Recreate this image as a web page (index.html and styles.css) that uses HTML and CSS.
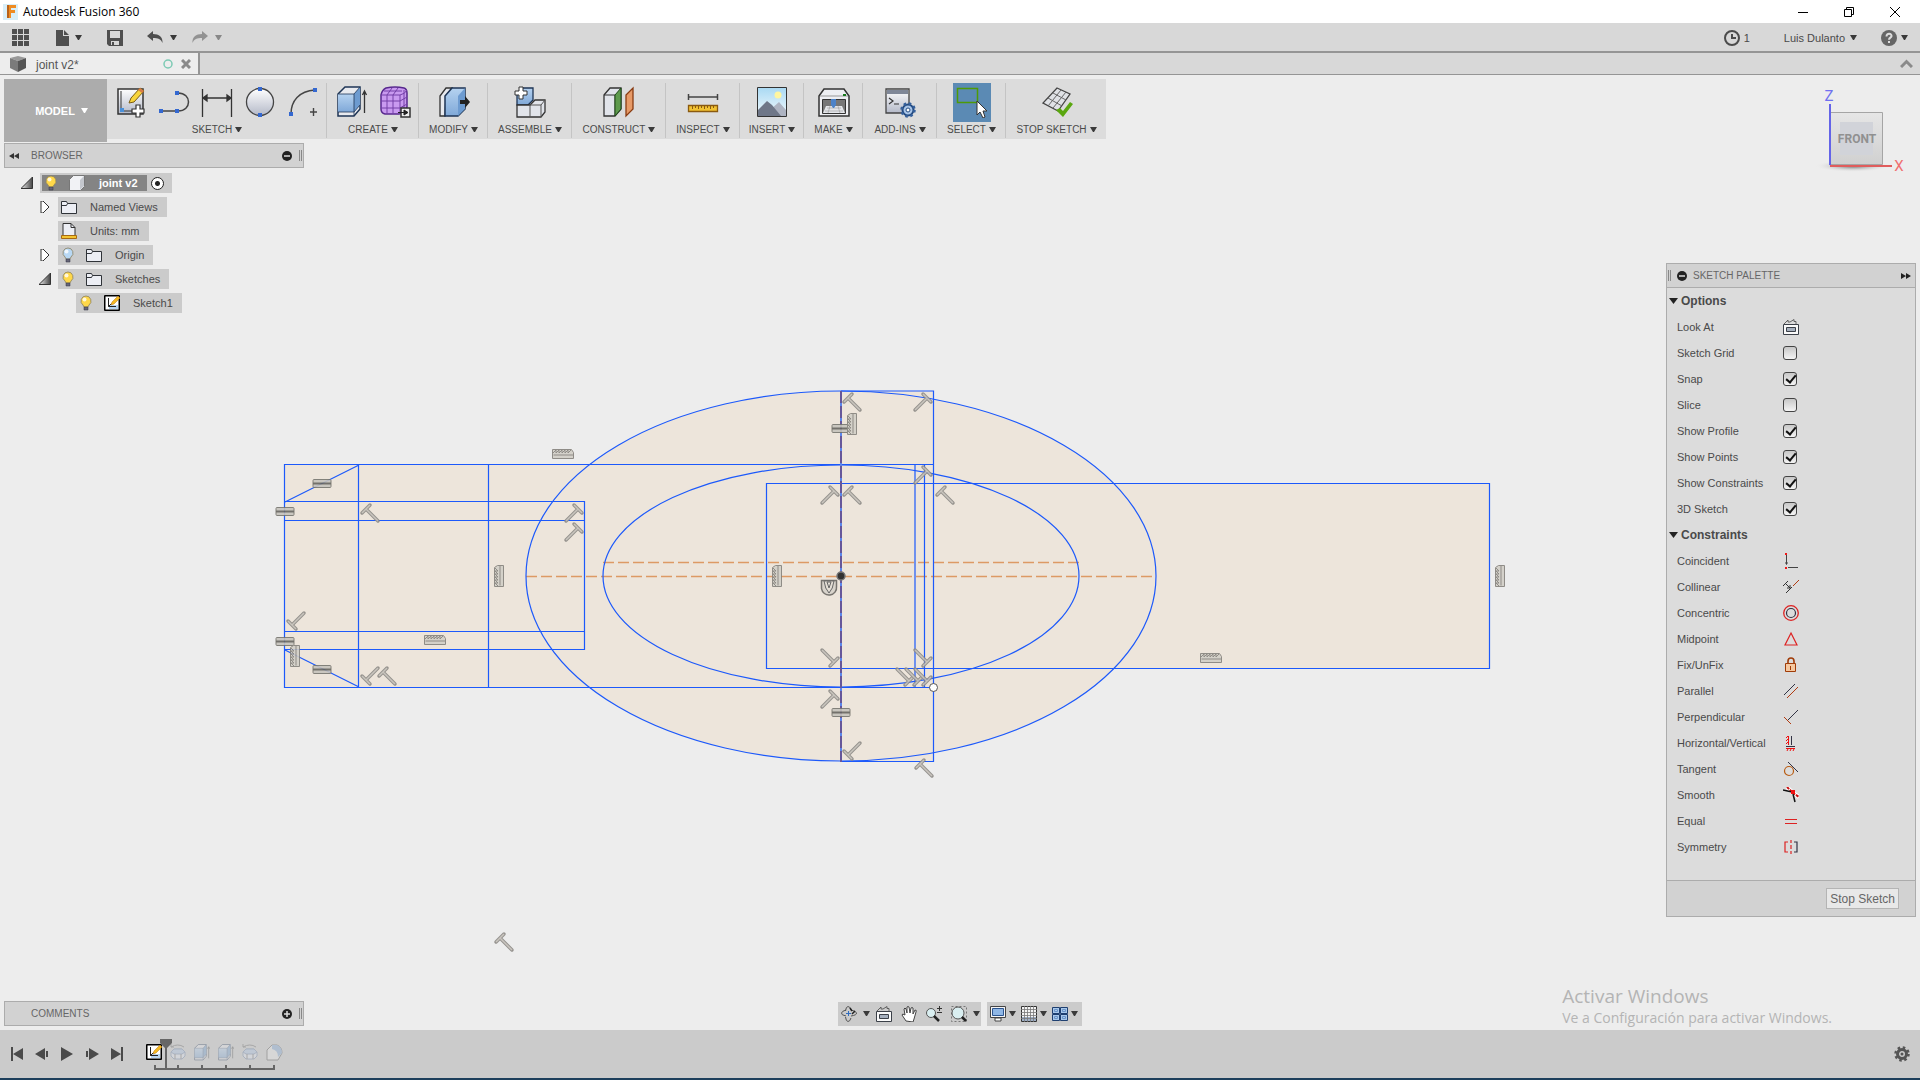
FILE: index.html
```html
<!DOCTYPE html>
<html lang="en">
<head>
    <meta charset="utf-8">
    <title>Autodesk Fusion 360</title>
    <link rel="stylesheet" href="styles.css">
</head>
<body>
    <!-- shared icons -->
    <svg class="defs" width="0" height="0">
        <defs>
            <linearGradient id="g-white" x1="0" y1="0" x2="0" y2="1"><stop offset="0" stop-color="#fff"/><stop offset="1" stop-color="#b4b9c8"/></linearGradient>
            <linearGradient id="g-blue" x1="0" y1="0" x2="0" y2="1"><stop offset="0" stop-color="#b5d2f0"/><stop offset="1" stop-color="#7fa8d8"/></linearGradient>
            <linearGradient id="g-sky" x1="0" y1="0" x2="0" y2="1"><stop offset="0" stop-color="#a9d9f3"/><stop offset="1" stop-color="#f3fafd"/></linearGradient>
            <linearGradient id="g-tri" x1="0" y1="0" x2="1" y2="0"><stop offset="0" stop-color="#eee"/><stop offset="1" stop-color="#444"/></linearGradient>
            <linearGradient id="g-cube" x1="0" y1="0" x2="0" y2="1"><stop offset="0" stop-color="#e6e6e6"/><stop offset="1" stop-color="#d0d0d0"/></linearGradient>
            <radialGradient id="g-shadow"><stop offset="0" stop-color="#666"/><stop offset="1" stop-color="#ededed" stop-opacity="0"/></radialGradient>
            <symbol id="caret" viewBox="0 0 7 6"><path d="M0 0h7L4 5H3z" fill="#3a3a3a"/></symbol>
            <symbol id="bulb" viewBox="0 0 14 16">
                <path d="M7 1a5 5 0 0 0-3 9l1 2h4l1-2a5 5 0 0 0-3-9z" fill="currentColor" stroke="#8a8060" stroke-width=".8"/>
                <circle cx="5.500" cy="4.500" r="2" fill="#fff" opacity=".8"/>
                <path d="M5 12h4v3H5z" fill="#667" stroke="#334" stroke-width=".5"/>
            </symbol>
            <symbol id="folder" viewBox="0 0 16 14"><path d="M.5 13.500v-12h5l1 2h9v10z" fill="#eceef4" stroke="#2f3338"/><path d="M.5 5.500h5l1-2" fill="none" stroke="#2f3338"/></symbol>
            <symbol id="sketch" viewBox="0 0 16 16">
                <path d="M.5.500h15v15H.5z" fill="#fff" stroke="#000"/><path d="M1 1h14v14H1z" fill="none" stroke="#000"/><path d="M5 10h9v4H5z" fill="#b9d6f2"/>
                <path d="M4.500 3v8.500H12M4.500 11.500l3-3" fill="none" stroke="#222"/>
                <path d="M7 10l1-3 6-6 2 2-6 6z" fill="#f5b921" stroke="#b5751a" stroke-width=".5"/>
            </symbol>
            <symbol id="lookat" viewBox="0 0 16 16">
                <path d="M.5 5.500h15v10H.5z" fill="#fafafa" stroke="#3b4048"/><path d="M3.500 8.500h9v4h-9z" fill="#a5afbd" stroke="#3b4048"/>
                <path d="M1 5l4-4v2l2 0 4-2.500v2h2l0 3" fill="none" stroke="#555" stroke-width=".9"/>
            </symbol>
            <symbol id="box" viewBox="0 0 30 32">
                <path d="M1 8l7-7h15v22l-6 7H1z" fill="#e8eaef" stroke="#1e3555" stroke-width="1.500"/><path d="M1 8h16v18H1z" fill="url(#g-blue)"/>
                <path d="M17 8l6-7v18l-6 7z" fill="#6d9bd0"/><path d="M1 8h16V30M17 8l6-7M1 26h16l6-7" fill="none" stroke="#1e3555" stroke-width=".8"/>
                <path d="M27.500 27V6M25.500 9l2-4 2 4" fill="none" stroke="#333" stroke-width="1.300"/>
            </symbol>
            <symbol id="ring" viewBox="0 0 16 16">
                <path d="M1 8l3-3h8l3 3v4l-3 3H4l-3-3z" fill="#e4eaf4" stroke="#6f86ac"/><path d="M1 8l3-3h8l3 3-3 2H4z" fill="#a9c3e6" stroke="#6f86ac"/>
                <path d="M1 3q7-4 13 0M1 0v3h3M5 10v5M11 10v5" fill="none" stroke="#666"/>
            </symbol>
            <!-- constraint glyphs, drawn around 0,0 -->
            <g id="perp"><path d="M-8 0l8-8M-4-4L8 8" fill="none" stroke="#8d8a86" stroke-width="3.500" stroke-linecap="round"/><path d="M-8 0l8-8M-4-4L8 8" fill="none" stroke="#c6c1ba" stroke-width="1.500"/></g>
            <g id="bars"><rect x="-9" y="-3.500" width="18" height="8" rx="1" fill="#c6c2bb" stroke="#77756f"/><path d="M-9 .5H9" stroke="#66645f" stroke-width="2"/></g>
            <g id="hatch"><path d="M-10.500 4.500h21v-6l-2-3h-19z" fill="#d2cec7" stroke="#85827c"/><path d="M-9.500 1H10M-10-1l3-3v3l3-3v3l3-3v3l3-3v3l3-3v3l3-3" fill="none" stroke="#85827c"/></g>
        </defs>
    </svg>

    <header class="titlebar">
        <svg width="15" height="16" viewBox="0 0 15 16"><path d="M0 0h15v16H0z" fill="#d8eef8"/><path d="M4 1h9v3H8v2h4v3H8v5H4z" fill="#ef8b22"/><path d="M4 1h2v13H4z" fill="#b8621a"/></svg>
        <h1>Autodesk Fusion 360</h1>
        <div class="window-buttons">
            <button aria-label="Minimize"><svg width="10" height="10"><path d="M0 5.500h10" stroke="#000"/></svg></button>
            <button aria-label="Restore"><svg width="10" height="10" fill="none" stroke="#000"><path d="M.5 2.500h7v7h-7zM2.500 2V.5h7v7H8"/></svg></button>
            <button aria-label="Close"><svg width="10" height="10" stroke="#000"><path d="M0 0l10 10M10 0L0 10"/></svg></button>
        </div>
    </header>

    <div class="quickbar">
        <button class="apps" aria-label="Data panel"><svg width="17" height="17" fill="#4f4f4f"><path d="M0 0h5v5H0zM6 0h5v5H6zM12 0h5v5h-5zM0 6h5v5H0zM6 6h5v5H6zM12 6h5v5h-5zM0 12h5v5H0zM6 12h5v5H6zM12 12h5v5h-5z"/></svg></button>
        <button class="file" aria-label="File"><svg width="13" height="16" fill="#4f4f4f"><path d="M0 0h7v6h6v10H0zM8 0l5 5H8z"/></svg><svg class="caret"><use href="#caret"/></svg></button>
        <button class="save" aria-label="Save"><svg width="16" height="16"><path d="M0 0h16v16H2l-2-2z" fill="#4f4f4f"/><path d="M3 1h10v7H3zM4 11h8v4H4z" fill="#d8d8d8"/><path d="M5 12h2v3H5z" fill="#4f4f4f"/></svg></button>
        <button class="undo" aria-label="Undo"><svg width="16" height="13" fill="#4f4f4f"><path d="M0 5l6-5v3c6 0 10 3 9.500 9C14 8 11 7 6 7v3z"/></svg><svg class="caret"><use href="#caret"/></svg></button>
        <button class="redo" aria-label="Redo"><svg width="16" height="13" fill="#4f4f4f"><path d="M16 5l-6-5v3C4 3 0 6 .5 12 2 8 5 7 10 7v3z"/></svg><svg class="caret"><use href="#caret"/></svg></button>
        <div class="account">
            <button class="jobs"><svg width="16" height="16" fill="none" stroke="#4b4b4b" stroke-width="2"><circle cx="8" cy="8" r="7"/><path d="M8 4v4h4"/></svg>1</button>
            <button class="user">Luis Dulanto<svg class="caret"><use href="#caret"/></svg></button>
            <button class="help" aria-label="Help"><svg width="16" height="16"><circle cx="8" cy="8" r="8" fill="#666"/><path d="M5.500 6.500c0-4 5.500-3 5-.3-.3 1.500-2.500 1.500-2.500 3.500M8 11v2" fill="none" stroke="#ddd" stroke-width="2"/></svg><svg class="caret"><use href="#caret"/></svg></button>
        </div>
    </div>

    <div class="tabs">
        <div class="tab">
            <svg width="16" height="16"><path d="M0 2l8-2 8 2-8 3z" fill="#999"/><path d="M0 2l8 3v11l-8-4z" fill="#7b7b7b"/><path d="M16 2L8 5v11l8-4z" fill="#555"/></svg>
            <span>joint v2*</span>
            <svg class="state" width="10" height="10"><circle cx="5" cy="5" r="4" fill="none" stroke="#7ccab4" stroke-width="1.500"/></svg>
            <button aria-label="Close tab"><svg width="10" height="10" stroke="#8a8a8a" stroke-width="3"><path d="M1 1l8 8M9 1L1 9"/></svg></button>
        </div>
        <button class="collapse" aria-label="Collapse"><svg width="13" height="9" fill="none" stroke="#8a8a8a" stroke-width="3"><path d="M1 8l5.500-5.500L12 8"/></svg></button>
    </div>

    <main class="workspace">
        <svg class="canvas" viewBox="0 75 1920 955">
            <g fill="#ede5db">
                <path d="M285 465h648v223H285zM767 484h723v185H767zM841 391h92v371h-92z"/>
                <ellipse cx="841" cy="576" rx="315" ry="185"/>
            </g>
            <g fill="none" stroke="#dd9a65" stroke-width="1.500" stroke-dasharray="11 4"><path d="M526 576.500h630M603 562.500h476"/></g>
            <g fill="none" stroke="#1c59fb" stroke-width="1.200">
                <path d="M933 464.500H284.500v223H933M358.500 465v223M488.500 465v223M285 501.500h299.500v148H285M285 520.500h299M285 631.500h299M285 502l74-37M285 650l74 37"/>
                <path d="M841 391h92.500v370.500H841M766.500 483.500h723v185h-723zM915 465v222M924.500 465v222"/>
                <ellipse cx="841" cy="576" rx="315" ry="185"/>
                <ellipse cx="841" cy="576" rx="238" ry="111"/>
            </g>
            <path d="M841 391v371" stroke="#5a85ea" stroke-width="2"/><path d="M841 391v371" stroke="#66579a" stroke-width="2" stroke-dasharray="12 3"/>
            <g opacity=".9">
                <use href="#perp" x="370" y="513"/><use href="#perp" x="852" y="402"/><use href="#perp" x="852" y="495"/><use href="#perp" x="945" y="495"/>
                <use href="#perp" x="924" y="768"/><use href="#perp" x="387" y="676"/><use href="#perp" x="504" y="942"/>
                <use href="#perp" transform="translate(574 513) rotate(90)"/><use href="#perp" transform="translate(574 532) rotate(90)"/>
                <use href="#perp" transform="translate(923 402) rotate(90)"/><use href="#perp" transform="translate(923 475) rotate(90)"/>
                <use href="#perp" transform="translate(830 495) rotate(90)"/><use href="#perp" transform="translate(830 699) rotate(90)"/>
                <use href="#perp" transform="translate(296 621) rotate(270)"/><use href="#perp" transform="translate(370 676) rotate(270)"/><use href="#perp" transform="translate(852 751) rotate(270)"/>
                <use href="#perp" transform="translate(830 658) rotate(180)"/><use href="#perp" transform="translate(923 658) rotate(180)"/>
                <use href="#perp" transform="translate(905 677) rotate(180)"/><use href="#perp" transform="translate(914 677) rotate(180)"/><use href="#perp" transform="translate(923 677) rotate(180)"/>
                <use href="#bars" x="322" y="483"/><use href="#bars" x="285" y="511"/><use href="#bars" x="285" y="641"/><use href="#bars" x="322" y="669"/><use href="#bars" x="841" y="428"/><use href="#bars" x="841" y="712"/>
                <use href="#hatch" x="563" y="454"/><use href="#hatch" x="435" y="640"/><use href="#hatch" x="1211" y="658"/>
                <use href="#hatch" transform="translate(499 576) rotate(270)"/><use href="#hatch" transform="translate(295 656) rotate(270)"/><use href="#hatch" transform="translate(852 424) rotate(270)"/>
                <use href="#hatch" transform="translate(777 576) rotate(270)"/><use href="#hatch" transform="translate(1500 576) rotate(270)"/>
            </g>
            <path d="M821.500 580.500h15v6a7.500 7.500 0 0 1-15 2z" fill="#d8d3cb" stroke="#77746f" stroke-width="1.500"/><path d="M824 581q1 8 5 12 4-4 5-12zM827 582l2 6 2-6z" fill="#e4ded5" stroke="#666"/>
            <circle cx="841" cy="576" r="4" fill="#333" stroke="#777" stroke-width="1.500"/>
            <circle cx="933.500" cy="687.500" r="4" fill="#fff" stroke="#555"/>
        </svg>

        <nav class="toolbar">
            <button class="model">MODEL<svg width="7" height="5"><path d="M0 0h7L4 5H3z" fill="#fff"/></svg></button>
            <div class="group">
                <div class="icons">
                    <button aria-label="Create sketch"><svg width="32" height="32"><path d="M3 3h25v25H3z" fill="url(#g-white)" stroke="#333" stroke-width="1.500"/><path d="M6 5v20h12" fill="none" stroke="#333"/><path d="M5 22h4v4H5z" fill="#4a90d9"/><path d="M14 17l2-5L25 2l4 3-10 11z" fill="#f8d53c" stroke="#7a5c14"/><path d="M25 2l4 3-2 2-4-3z" fill="#d87d4a"/><path d="M21 19h4v4h4v4h-4v4h-4v-4h-4v-4h4z" fill="#fff" stroke="#333" stroke-width="1.200"/></svg></button>
                    <button aria-label="Line"><svg width="32" height="32"><path d="M4 25h16c14 0 14-18 0-18" fill="none" stroke="#444" stroke-width="1.500"/><path d="M1 23h4v4H1zM17 23h4v4h-4zM17 5h4v4h-4z" fill="#3468d0"/></svg></button>
                    <button aria-label="Dimension"><svg width="32" height="32"><path d="M1.500 3v28M30.500 3v28M2 12h28M6 9l-4 3 4 3zM26 9l4 3-4 3z" fill="#333" stroke="#333" stroke-width="1.300"/></svg></button>
                    <button aria-label="Circle"><svg width="32" height="32"><circle cx="16" cy="16" r="13.500" fill="url(#g-white)" stroke="#444" stroke-width="1.300"/><path d="M14 1h4v4h-4zM14 27h4v4h-4z" fill="#3468d0"/></svg></button>
                    <button aria-label="Arc"><svg width="32" height="32"><path d="M4 28C4 15 12 5 28 4M23 26h7M26.500 22v8" fill="none" stroke="#444" stroke-width="1.400"/><path d="M2 26h4v4H2zM26 2h4v4h-4z" fill="#3468d0"/></svg></button>
                </div>
                <button class="menu">SKETCH<svg class="caret"><use href="#caret"/></svg></button>
            </div>
            <div class="group">
                <div class="icons">
                    <button aria-label="Extrude"><svg width="32" height="32"><use href="#box"/></svg></button>
                    <button aria-label="Create form"><svg width="32" height="32"><path d="M7 2q9-2 18 0 3 1 3 5v14q-1 5-8 7H6q-4-1-4-5V9q1-5 5-7z" fill="#c99af0" stroke="#58298e" stroke-width="1.500"/><path d="M2 9h19q5-1 7-5M21 9v19M8 9v19M14 9v19M2 15h19l7-4M2 22h19l7-4M5 5h18M13 2l-5 7M19 2l-5 7M25 4v21" fill="none" stroke="#7440a8"/><path d="M22 22h9v9h-9z" fill="#eee" stroke="#333" stroke-width="1.500"/><path d="M19 26.500h8M25 24l4 2.500-4 2.500z" fill="#222" stroke="#222"/></svg></button>
                </div>
                <button class="menu">CREATE<svg class="caret"><use href="#caret"/></svg></button>
            </div>
            <div class="group">
                <div class="icons"><button aria-label="Press pull"><svg width="32" height="32"><path d="M2 10l6-8h6l-6 8-1 20H2z" fill="#e7e9ee" stroke="#333" stroke-width="1.300"/><path d="M7 10l7-8h13v21l-7 7H7z" fill="url(#g-blue)" stroke="#1e3555" stroke-width="1.500"/><path d="M20 10l7-8v21l-7 7z" fill="#6d9bd0"/><path d="M22 14h5v-4l5 6-5 6v-4h-5z" fill="#222"/></svg></button></div>
                <button class="menu">MODIFY<svg class="caret"><use href="#caret"/></svg></button>
            </div>
            <div class="group">
                <div class="icons"><button aria-label="New component"><svg width="32" height="32"><path d="M3 8l5-6h11v12l-5 5H3z" fill="url(#g-blue)" stroke="#1e3555" stroke-width="1.300"/><path d="M3 19h13l5-5h10v12l-4 5H3z" fill="#e1e4ea" stroke="#333" stroke-width="1.300"/><path d="M16 19v12M16 19h11l4-5M27 19v12" fill="none" stroke="#555"/><path d="M5 1h4v4h4v4H9v4H5V9H1V5h4z" fill="#fff" stroke="#333"/></svg></button></div>
                <button class="menu">ASSEMBLE<svg class="caret"><use href="#caret"/></svg></button>
            </div>
            <div class="group">
                <div class="icons"><button aria-label="Offset plane"><svg width="32" height="32"><path d="M1 9l6-7h11v21l-6 7H1z" fill="#e1e4ea" stroke="#333" stroke-width="1.300"/><path d="M1 9h11v21" fill="none" stroke="#333"/><path d="M12 9l6-7v21l-6 7z" fill="#5d9a4d" stroke="#1f4a18"/><path d="M23 9l7-7v21l-7 7z" fill="#e79a67" stroke="#8a3c12" stroke-width="1.300"/></svg></button></div>
                <button class="menu">CONSTRUCT<svg class="caret"><use href="#caret"/></svg></button>
            </div>
            <div class="group">
                <div class="icons"><button aria-label="Measure"><svg width="32" height="32"><path d="M1.500 8v6M30.500 8v6M1 11h30" stroke="#444" stroke-width="1.500"/><path d="M1.500 19.500h29v6h-29z" fill="#f1c232" stroke="#8a5a10" stroke-width="1.300"/><path d="M5.500 20v3M8.500 20v2M11.500 20v3M14.500 20v2M17.500 20v3M20.500 20v2M23.500 20v3M26.500 20v2" stroke="#8a5a10"/></svg></button></div>
                <button class="menu">INSPECT<svg class="caret"><use href="#caret"/></svg></button>
            </div>
            <div class="group">
                <div class="icons"><button aria-label="Decal"><svg width="32" height="32"><path d="M1.500 1.500h29v29h-29z" fill="url(#g-sky)"/><circle cx="22" cy="9" r="3.500" fill="#fff6a0"/><path d="M14 24l9-8 7 8v6H14z" fill="#aeb4c2"/><path d="M2 24l9-9 5 4 9 11H2z" fill="#6f7788"/><path d="M1.500 1.500h29v29h-29z" fill="none" stroke="#333"/></svg></button></div>
                <button class="menu">INSERT<svg class="caret"><use href="#caret"/></svg></button>
            </div>
            <div class="group">
                <div class="icons"><button aria-label="3D print"><svg width="32" height="32"><path d="M1 10l5-7h20l5 7v20H1z" fill="#eeeff2" stroke="#333" stroke-width="1.500"/><path d="M2 10h28" stroke="#999"/><path d="M25 8h3v2h-3z" fill="#167a1c"/><path d="M4.500 13.500h23v14h-23z" fill="#777" stroke="#333"/><path d="M8 20h16l3 7H5z" fill="#e4e6ea"/><path d="M9 22h14M7 25h18M12 20l-2 7M20 20l2 7" stroke="#999" stroke-width=".6"/><path d="M13 13h5v6l-2 3h-1l-2-3z" fill="#4d83c9"/></svg></button></div>
                <button class="menu">MAKE<svg class="caret"><use href="#caret"/></svg></button>
            </div>
            <div class="group">
                <div class="icons"><button aria-label="Scripts"><svg width="32" height="32"><path d="M2 3h23v24H2z" fill="url(#g-white)" stroke="#444" stroke-width="1.300"/><path d="M3 4h21v4H3z" fill="#7f8798"/><path d="M5 12l4 3-4 3M10 18h5" fill="none" stroke="#333" stroke-width="1.200"/><circle cx="24" cy="24" r="5.500" fill="#a9c5e8" stroke="#234a80" stroke-width="2"/><circle cx="24" cy="24" r="6.500" fill="none" stroke="#35609c" stroke-width="2.500" stroke-dasharray="2.500 2.600"/><circle cx="24" cy="24" r="2" fill="#fff" stroke="#234a80"/></svg></button></div>
                <button class="menu">ADD-INS<svg class="caret"><use href="#caret"/></svg></button>
            </div>
            <div class="group">
                <div class="icons"><button class="active" aria-label="Select"><svg width="32" height="32"><path d="M1.500 2.500h20v14h-20z" fill="none" stroke="#4e9a06" stroke-width="1.500"/><path d="M21 15v14l3-3 3 6 2-1-2-6h4z" fill="#fff" stroke="#333"/></svg></button></div>
                <button class="menu">SELECT<svg class="caret"><use href="#caret"/></svg></button>
            </div>
            <div class="group">
                <div class="icons"><button aria-label="Stop sketch"><svg width="32" height="32"><path d="M16 2l13 6-12 17L2 17z" fill="#e0e2e6" stroke="#444" stroke-width="1.300"/><path d="M20 4L7 20M25 6L12 22M12 7l13 7M7 12l14 8" stroke="#666" fill="none"/><path d="M15 24l4-2 3 3 7-9 3 2-10 13z" fill="#5aa70f"/></svg></button></div>
                <button class="menu">STOP SKETCH<svg class="caret"><use href="#caret"/></svg></button>
            </div>
        </nav>

        <svg class="viewcube" width="90" height="95" viewBox="0 0 90 95">
            <ellipse cx="38" cy="80" rx="38" ry="6" fill="url(#g-shadow)"/>
            <path d="M15.500 26.500h52v52h-52z" fill="url(#g-cube)" stroke="#a5a5a5"/>
            <path d="M25 36h33v33H25z" fill="#d1d3d9"/>
            <text x="42" y="57" class="face">FRONT</text>
            <path d="M15 18v61" stroke="#6464e8" stroke-width="2"/><path d="M15 80h62" stroke="#e05c5c" stroke-width="2"/>
            <text x="14" y="15" class="axis z">Z</text><text x="84" y="85" class="axis x">X</text>
        </svg>

        <section class="browser">
            <header class="bar">
                <svg width="10" height="6" fill="#333"><path d="M5 0v6L0 3zM10 0v6L5 3z"/></svg>
                <h2>BROWSER</h2>
                <button aria-label="Collapse all"><svg width="10" height="10"><circle cx="5" cy="5" r="5" fill="#222"/><path d="M2 5h6" stroke="#ddd" stroke-width="1.500"/></svg></button>
                <span class="grip"></span>
            </header>
            <ul class="tree">
                <li><svg class="arrow" viewBox="0 0 12 12"><path d="M11.500 0v11.500H0z" fill="url(#g-tri)" stroke="#333"/></svg>
                    <div class="node root"><span class="name"><svg class="bulb on"><use href="#bulb"/></svg><svg width="16" height="16" viewBox="0 0 16 16"><path d="M.5 4.500l4-4h11v11l-4 4H.5z" fill="#f1f2f5" stroke="#777"/><path d="M11 5l4-4v10l-4 4z" fill="#c4c7cd"/></svg>joint v2</span><label class="activate"><input type="radio" name="active" checked aria-label="Activate component"></label></div></li>
                <li class="deep"><svg class="arrow" viewBox="0 0 12 12"><path d="M2 0v12l2 0 6-6-6-6z" fill="#fff" stroke="#333"/></svg><div class="node"><svg class="folder"><use href="#folder"/></svg>Named Views</div></li>
                <li class="deep"><span class="arrow"></span><div class="node"><svg class="folder" viewBox="0 0 16 16"><path d="M2 12.500V.5h8l4 4v8z" fill="#eceef4" stroke="#333"/><path d="M10 .5v4h4" fill="none" stroke="#333"/><path d="M.5 12.500h15v3H.5z" fill="#f4c430" stroke="#a86a10"/></svg>Units: mm</div></li>
                <li class="deep"><svg class="arrow" viewBox="0 0 12 12"><path d="M2 0v12l2 0 6-6-6-6z" fill="#fff" stroke="#333"/></svg><div class="node"><svg class="bulb off"><use href="#bulb"/></svg><svg class="folder"><use href="#folder"/></svg>Origin</div></li>
                <li class="deep"><svg class="arrow" viewBox="0 0 12 12"><path d="M11.500 0v11.500H0z" fill="url(#g-tri)" stroke="#333"/></svg><div class="node"><svg class="bulb on"><use href="#bulb"/></svg><svg class="folder"><use href="#folder"/></svg>Sketches</div></li>
                <li class="deeper"><div class="node"><svg class="bulb on"><use href="#bulb"/></svg><svg class="folder"><use href="#sketch"/></svg>Sketch1</div></li>
            </ul>
        </section>

        <aside class="palette">
            <header class="bar">
                <span class="grip"></span>
                <button aria-label="Collapse"><svg width="10" height="10"><circle cx="5" cy="5" r="5" fill="#222"/><path d="M2 5h6" stroke="#ddd" stroke-width="1.500"/></svg></button>
                <h2>SKETCH PALETTE</h2>
                <svg width="10" height="6" fill="#222"><path d="M0 0v6l5-3zM5 0v6l5-3z"/></svg>
            </header>
            <div class="rows">
                <h3><svg width="9" height="6"><path d="M0 0h9L4.500 6z" fill="#222"/></svg>Options</h3>
                <div class="row"><span>Look At</span><button aria-label="Look At"><svg width="16" height="16"><use href="#lookat"/></svg></button></div>
                <div class="row"><label for="grid">Sketch Grid</label><input type="checkbox" id="grid"></div>
                <div class="row"><label for="snap">Snap</label><input type="checkbox" id="snap" checked></div>
                <div class="row"><label for="slice">Slice</label><input type="checkbox" id="slice"></div>
                <div class="row"><label for="profile">Show Profile</label><input type="checkbox" id="profile" checked></div>
                <div class="row"><label for="points">Show Points</label><input type="checkbox" id="points" checked></div>
                <div class="row"><label for="constraints">Show Constraints</label><input type="checkbox" id="constraints" checked></div>
                <div class="row"><label for="sketch3d">3D Sketch</label><input type="checkbox" id="sketch3d" checked></div>
                <h3><svg width="9" height="6"><path d="M0 0h9L4.500 6z" fill="#222"/></svg>Constraints</h3>
                <div class="row"><span>Coincident</span><button aria-label="Coincident"><svg width="16" height="16"><path d="M3.500 2v9M5 14.500h10M2.500 9.500l1 2 1-2" fill="none" stroke="#444"/><path d="M2 0h2v2H2zM2 14h2v2H2z" fill="#f01818"/></svg></button></div>
                <div class="row"><span>Collinear</span><button aria-label="Collinear"><svg width="16" height="16" fill="none"><path d="M0 7l5-5M3 14l6-6M2 4l5 5M7 6v3H4" stroke="#333"/><path d="M10 7l6-6" stroke="#b03a10"/></svg></button></div>
                <div class="row"><span>Concentric</span><button aria-label="Concentric"><svg width="16" height="16" fill="none"><circle cx="8" cy="8" r="7.300" stroke="#d22" stroke-width="1.300"/><circle cx="8" cy="8" r="4.500" stroke="#334" stroke-width="1.200"/></svg></button></div>
                <div class="row"><span>Midpoint</span><button aria-label="Midpoint"><svg width="16" height="16"><path d="M8 2l6 12H2z" fill="none" stroke="#d22" stroke-width="1.200"/></svg></button></div>
                <div class="row"><span>Fix/UnFix</span><button aria-label="Fix"><svg width="16" height="16"><path d="M5 7V4q0-3 3-3t3 3v3" fill="none" stroke="#a03c08" stroke-width="1.600"/><path d="M2.500 6.500h10v8h-10z" fill="#f5c8a0" stroke="#a03c08"/><path d="M7.500 9v4" stroke="#a03c08"/></svg></button></div>
                <div class="row"><span>Parallel</span><button aria-label="Parallel"><svg width="16" height="16"><path d="M1 12L12 1" stroke="#334"/><path d="M4 15L15 4" stroke="#b03a10"/></svg></button></div>
                <div class="row"><span>Perpendicular</span><button aria-label="Perpendicular"><svg width="16" height="16"><path d="M5 11L15 1" stroke="#334"/><path d="M1 8l7 7" stroke="#b03a10"/></svg></button></div>
                <div class="row"><span>Horizontal/Vertical</span><button aria-label="Horizontal/Vertical"><svg width="16" height="16" fill="none"><path d="M8.500 1v9M3 11.500h9" stroke="#334"/><path d="M5.500 1v9M3 3l2-2M3 6l2-2M3 9l2-2M3 13.500h9M4 16l1-2M7 16l1-2M10 16l1-2" stroke="#e11"/></svg></button></div>
                <div class="row"><span>Tangent</span><button aria-label="Tangent"><svg width="16" height="16" fill="none"><circle cx="6" cy="10" r="4.500" stroke="#b85c12" stroke-width="1.200"/><path d="M5 1l10 10" stroke="#334"/></svg></button></div>
                <div class="row"><span>Smooth</span><button aria-label="Smooth"><svg width="16" height="16" fill="none"><path d="M4 0l6 6 6 4" stroke="#fff" stroke-width="4"/><path d="M4 0l6 6 6 4" stroke="#c11" stroke-width="2" stroke-dasharray="3 1"/><path d="M0 3l9 2M10 7l2 8" stroke="#111" stroke-width="1.500"/><path d="M8 3h4v4H8z" fill="#e11"/></svg></button></div>
                <div class="row"><span>Equal</span><button aria-label="Equal"><svg width="16" height="16"><path d="M2 6.500h12M2 10.500h12" stroke="#d22"/></svg></button></div>
                <div class="row"><span>Symmetry</span><button aria-label="Symmetry"><svg width="16" height="16" fill="none"><path d="M5 3H2v10h3M8 1v3M8 6v4M8 12v3" stroke="#d22" stroke-width="1.200"/><path d="M11 3h3v10h-3" stroke="#334" stroke-width="1.200"/></svg></button></div>
            </div>
            <footer><button>Stop Sketch</button></footer>
        </aside>

        <div class="watermark">
            <p class="big">Activar Windows</p>
            <p>Ve a Configuración para activar Windows.</p>
        </div>

        <div class="dock">
            <section class="bar comments">
                <h2>COMMENTS</h2>
                <button aria-label="Expand comments"><svg width="10" height="10"><circle cx="5" cy="5" r="5" fill="#222"/><path d="M2 5h6M5 2v6" stroke="#ddd" stroke-width="1.500"/></svg></button>
                <span class="grip"></span>
            </section>
            <div class="viewbar">
                <div class="first">
                    <button aria-label="Orbit"><svg width="16" height="16" fill="none" stroke="#555"><path d="M5 10Q0 9 .5 7T5 4M10 4q5 1 5.500 3T10 10M4.500 5Q5 .5 7 .5T10 4M4.500 11q.5 4.500 2.500 4.500T10 12"/><path d="M5 7.500h5M7.500 5v5" stroke="#2f6cc0"/><path d="M9 2l2 3M14 5l-3 3" stroke="#222" stroke-width="1.500"/></svg></button>
                    <svg class="caret"><use href="#caret"/></svg>
                    <button aria-label="Look at"><svg width="16" height="16"><use href="#lookat"/></svg></button>
                    <button aria-label="Pan"><svg width="16" height="16"><path d="M5 15l-4-6q0-2 3 0L3 3q1-2 2 0l1 4V1q1-1 2 0l1 6 1-5q1-1 2 0v6l2-4q2 0 1 2l-2 7-1 3z" fill="#fff" stroke="#444"/></svg></button>
                    <button aria-label="Zoom"><svg width="16" height="16"><circle cx="5" cy="7" r="4.500" fill="#d9eef0" stroke="#555"/><path d="M8 10l5 5" stroke="#222" stroke-width="2.500"/><path d="M13.500 0v5M11 2.500h5M11 6.500h5" stroke="#333"/></svg></button>
                    <button aria-label="Zoom window"><svg width="16" height="16"><path d="M.5.500h15v15H.5z" fill="none" stroke="#777" stroke-dasharray="2 2"/><circle cx="7" cy="7" r="6" fill="#d9eef0" stroke="#555"/><path d="M11 11l4 4" stroke="#222" stroke-width="2.500"/></svg></button>
                    <svg class="caret"><use href="#caret"/></svg>
                </div>
                <div class="second">
                    <button aria-label="Display"><svg width="16" height="16"><path d="M.5.500h15v11H.5z" fill="#f4f4f4" stroke="#444"/><path d="M2.500 2.500h11v7h-11z" fill="#8fb7e6" stroke="#2c5590"/><path d="M5 12h6v3H5z" fill="#fff" stroke="#444"/></svg></button>
                    <svg class="caret"><use href="#caret"/></svg>
                    <button aria-label="Grid"><svg width="16" height="16"><path d="M.5.500h15v15H.5z" fill="#f4f4f4" stroke="#333"/><path d="M1 11h14v4H1z" fill="#9fb0c8"/><path d="M3.500 0v16M6.500 0v16M9.500 0v16M12.500 0v16M0 3.500h16M0 6.500h16M0 9.500h16M0 12.500h16" stroke="#777" stroke-width=".8"/></svg></button>
                    <svg class="caret"><use href="#caret"/></svg>
                    <button aria-label="Viewports"><svg width="16" height="16" fill="#a9c8ea" stroke="#1e3f70"><path d="M.5 1.500h7v6h-7zM8.500 1.500h7v6h-7zM.5 8.500h7v6h-7zM8.500 8.500h7v6h-7z"/><path d="M2.500 3.500h3v2h-3zM10.500 3.500h3v2h-3zM2.500 10.500h3v2h-3zM10.500 10.500h3v2h-3z" stroke="#6a94c8"/></svg></button>
                    <svg class="caret"><use href="#caret"/></svg>
                </div>
            </div>
        </div>
    </main>

    <footer class="timeline">
        <div class="player">
            <button aria-label="To start"><svg width="14" height="14" fill="#4a4a4a"><path d="M1 0h2v14H1zM13 1v12L3 7z"/></svg></button>
            <button aria-label="Step back"><svg width="14" height="14" fill="#4a4a4a"><path d="M10 1v12L0 7zM11 4h2v6h-2z"/></svg></button>
            <button aria-label="Play"><svg width="14" height="14" fill="#4a4a4a"><path d="M1 0v14l12-7z"/></svg></button>
            <button aria-label="Step forward"><svg width="14" height="14" fill="#4a4a4a"><path d="M4 1v12l10-6zM1 4h2v6H1z"/></svg></button>
            <button aria-label="To end"><svg width="14" height="14" fill="#4a4a4a"><path d="M11 0h2v14h-2zM1 1v12l10-6z"/></svg></button>
        </div>
        <svg width="140" height="36" viewBox="0 0 140 36">
            <use href="#sketch" x="0" y="8" width="16" height="16"/>
            <g opacity=".35">
                <use href="#ring" x="24" y="8" width="16" height="16"/><use href="#box" x="48" y="8" width="16" height="17"/><use href="#box" x="72" y="8" width="16" height="17"/>
                <use href="#ring" x="96" y="8" width="16" height="16"/><path d="M121 24V14l5-5h5q5 2 5 8l-4 7z" fill="#eee" stroke="#555"/><path d="M126 9h5q5 2 5 8l-4 4q0-7-6-8z" fill="#7fa8d8"/>
            </g>
            <path d="M9 29v4h119v-4M32 33v-4M56 33v-4M80 33v-4M104 33v-4" fill="none" stroke="#666" stroke-width="2"/>
            <path d="M14 3h12v4l-5 5v21h-2V12l-5-5z" fill="#666"/>
        </svg>
        <button class="settings" aria-label="Settings"><svg width="16" height="16"><circle cx="8" cy="8" r="4.500" fill="none" stroke="#555" stroke-width="3"/><circle cx="8" cy="8" r="6.500" fill="none" stroke="#555" stroke-width="2.500" stroke-dasharray="2.500 2.600"/><circle cx="8" cy="8" r="1.500" fill="#555"/></svg></button>
    </footer>
</body>
</html>
```
FILE: styles.css
```css
* {
    box-sizing: border-box;
}
body {
    margin: 0;
    min-height: 100vh;
    display: flex;
    flex-direction: column;
    font: 11px/16px "Liberation Sans", Arial, sans-serif;
    color: #4a4a4a;
    background: #ededed;
}
h1, h2, h3, p, ul {
    margin: 0;
    padding: 0;
    font-weight: normal;
}
button {
    display: flex;
    align-items: center;
    padding: 0;
    border: 0;
    background: none;
    font: inherit;
    color: inherit;
}
svg {
    flex: none;
}
.defs {
    position: absolute;
}
.caret {
    width: 7px;
    height: 6px;
}

/* title bar */
.titlebar {
    display: flex;
    align-items: center;
    height: 23px;
    padding: 0 20px 0 3px;
    gap: 5px;
    background: #fff;
}
.titlebar h1 {
    font: 12px/16px "Open Sans", sans-serif;
    color: #000;
}
.window-buttons {
    display: flex;
    gap: 36px;
    margin-left: auto;
}

/* file, save, undo */
.quickbar {
    display: flex;
    align-items: center;
    height: 30px;
    padding: 1px 12px 0;
    background: #d8d8d8;
    border-bottom: 2px solid #959595;
}
.file {
    gap: 6px;
    margin-left: 27px;
}
.save {
    margin-left: 25px;
}
.undo, .redo {
    gap: 7px;
}
.undo {
    margin-left: 24px;
}
.redo {
    margin-left: 15px;
    opacity: .5;
}
.account {
    display: flex;
    align-items: center;
    margin-left: auto;
}
.jobs {
    gap: 4px;
}
.user {
    gap: 5px;
    margin-left: 34px;
}
.help {
    gap: 4px;
    margin-left: 24px;
}

/* document tabs */
.tabs {
    display: flex;
    align-items: stretch;
    height: 22px;
    background: #d8d8d8;
    border-bottom: 1px solid #959595;
}
.tab {
    display: flex;
    align-items: center;
    width: 200px;
    padding: 0 7px 0 10px;
    gap: 8px;
    background: #ededed;
    border-right: 2px solid #959595;
    font-size: 12px;
    color: #555;
}
.tab span {
    padding: 3px 0 0 2px;
}
.tab .state {
    margin-left: auto;
}
.collapse {
    margin: 0 7px 0 auto;
}

/* workspace */
.workspace {
    position: relative;
    flex: 1;
    display: flex;
    flex-direction: column;
    min-height: 900px;
    padding: 4px;
}
.canvas {
    position: absolute;
    left: 0;
    top: 0;
    width: 100%;
    height: 100%;
}
.toolbar {
    position: relative;
    display: grid;
    grid-template-columns: 103px 220px 92px 69px 84px 94px 74px 64px 59px 74px 69px 100px;
    align-self: flex-start;
    height: 60px;
    background: #dcdcdc;
    font-size: 10px;
}
.model {
    justify-content: center;
    gap: 6px;
    padding-left: 12px;
    background: #acacac;
    font-size: 11px;
    font-weight: bold;
    color: #fff;
}
.group {
    display: flex;
    flex-direction: column;
    align-items: center;
    margin: 4px 0;
    padding-left: 1px;
    border-right: 1px solid #c4c4c4;
}
.group:last-child {
    border: 0;
}
.icons {
    display: flex;
    gap: 11px;
    height: 39px;
}
.icons button {
    align-items: flex-start;
    padding-top: 3px;
}
.icons .active {
    padding: 3px 3px 0;
    background: #5b8ab4;
}
.menu {
    gap: 3px;
    white-space: nowrap;
}
.viewcube {
    position: absolute;
    top: 11px;
    right: 15px;
}
.viewcube text {
    font-family: Roboto, sans-serif;
    text-anchor: middle;
}
.face {
    font-size: 12px;
    font-weight: bold;
    fill: #909090;
}
.axis {
    font-size: 15px;
}
.axis.z {
    fill: #7070f0;
}
.axis.x {
    fill: #f07070;
}

/* panel bars */
.bar {
    display: flex;
    align-items: center;
    height: 25px;
    background: #d2d2d2;
    border: 1px solid #acacac;
}
.bar h2 {
    font-size: 10px;
    color: #666;
}
.bar h2 + button {
    margin-left: auto;
}
.grip {
    width: 3px;
    height: 11px;
    border: 1px solid #888;
    border-width: 0 1px;
}

/* browser tree */
.browser {
    position: relative;
    width: 300px;
    margin-top: 4px;
}
.browser .bar {
    padding: 0 1px 0 4px;
    gap: 12px;
}
.browser .grip, .comments .grip {
    margin-left: -5px;
}
.tree {
    display: flex;
    flex-direction: column;
    gap: 4px;
    margin-top: 5px;
    list-style: none;
}
.tree li {
    display: flex;
    align-items: center;
    gap: 7px;
    padding-left: 17px;
}
.tree .deep {
    padding-left: 35px;
}
.tree .deeper {
    padding-left: 72px;
}
.arrow {
    width: 12px;
    height: 12px;
}
.node {
    display: flex;
    align-items: center;
    height: 20px;
    padding: 0 9px 0 3px;
    background: #cbcbcb;
}
.folder {
    width: 16px;
    height: 16px;
    margin-right: 13px;
}
.bulb {
    width: 14px;
    height: 16px;
    margin-right: 11px;
}
.on {
    color: #ffd84a;
}
.off {
    color: #b8d8f4;
}
.root {
    padding: 0 8px 0 2px;
}
.name {
    display: flex;
    align-items: center;
    height: 16px;
    padding: 0 9px 0 2px;
    background: #848484;
    font-weight: bold;
    color: #fff;
}
.name svg + svg {
    margin-right: 14px;
}
.activate {
    display: flex;
    margin-left: 4px;
}
.activate input {
    appearance: none;
    width: 13px;
    height: 13px;
    margin: 0;
    border: 1px solid #222;
    border-radius: 50%;
    background: radial-gradient(circle, #222 2px, #fff 3px);
}

/* sketch palette */
.palette {
    position: absolute;
    top: 188px;
    right: 4px;
    width: 250px;
    background: #dcdcdc;
    border: 1px solid #acacac;
}
.palette .bar {
    height: 24px;
    padding: 0 4px 0 1px;
    gap: 6px;
    border-width: 0 0 1px;
}
.palette .bar h2 + svg {
    margin-left: auto;
}
.rows {
    padding-bottom: 20px;
}
.rows h3 {
    display: flex;
    align-items: center;
    gap: 3px;
    height: 26px;
    padding-left: 2px;
    font-size: 12px;
    font-weight: bold;
}
.row {
    display: grid;
    grid-template-columns: 106px 16px;
    align-items: center;
    height: 26px;
    padding-left: 10px;
}
.row input {
    appearance: none;
    width: 14px;
    height: 14px;
    margin: 0;
    border: 1px solid #444;
    border-radius: 3px;
    background: linear-gradient(#c8c8c8, #f4f4f4);
}
.row input:checked::after {
    content: "";
    display: block;
    width: 4px;
    height: 8px;
    margin: 0 0 0 4px;
    border: solid #111;
    border-width: 0 2px 2px 0;
    transform: rotate(40deg);
}
.palette footer {
    display: flex;
    justify-content: flex-end;
    padding: 7px 16px;
    background: #d2d2d2;
    border-top: 1px solid #acacac;
}
.palette footer button {
    height: 21px;
    padding: 0 3px;
    background: #e8e8e8;
    border: 1px solid #b4b4b4;
    font-size: 12px;
    color: #666;
}

/* bottom of the workspace */
.watermark {
    position: absolute;
    right: 88px;
    bottom: 2px;
    font: 14px/20px "Open Sans", sans-serif;
    color: #b4b4b4;
}
.watermark .big {
    font-size: 19px;
    line-height: 24px;
}
.dock {
    position: relative;
    display: grid;
    grid-template-columns: 1fr auto 1fr;
    align-items: end;
    margin-top: auto;
}
.comments {
    width: 300px;
    padding: 0 1px 0 26px;
    gap: 12px;
}
.viewbar {
    display: flex;
    gap: 6px;
}
.first, .second {
    display: flex;
    align-items: center;
    height: 24px;
    padding: 0 4px 0 3px;
    background: #cbcbcb;
}
.first {
    gap: 9px;
}
.first .caret {
    margin: 0 -3px;
}
.second {
    gap: 4px;
}
.second button + .caret {
    margin: 0 1px 0 -1px;
}
.second .caret:last-child {
    margin-right: 0;
}

/* timeline */
.timeline {
    display: flex;
    align-items: center;
    height: 50px;
    padding: 0 10px;
    background: #cbcbcb;
    border-bottom: 2px solid #1d3f5c;
}
.player {
    display: flex;
    gap: 11px;
    margin-right: 22px;
}
.settings {
    margin-left: auto;
}
```
